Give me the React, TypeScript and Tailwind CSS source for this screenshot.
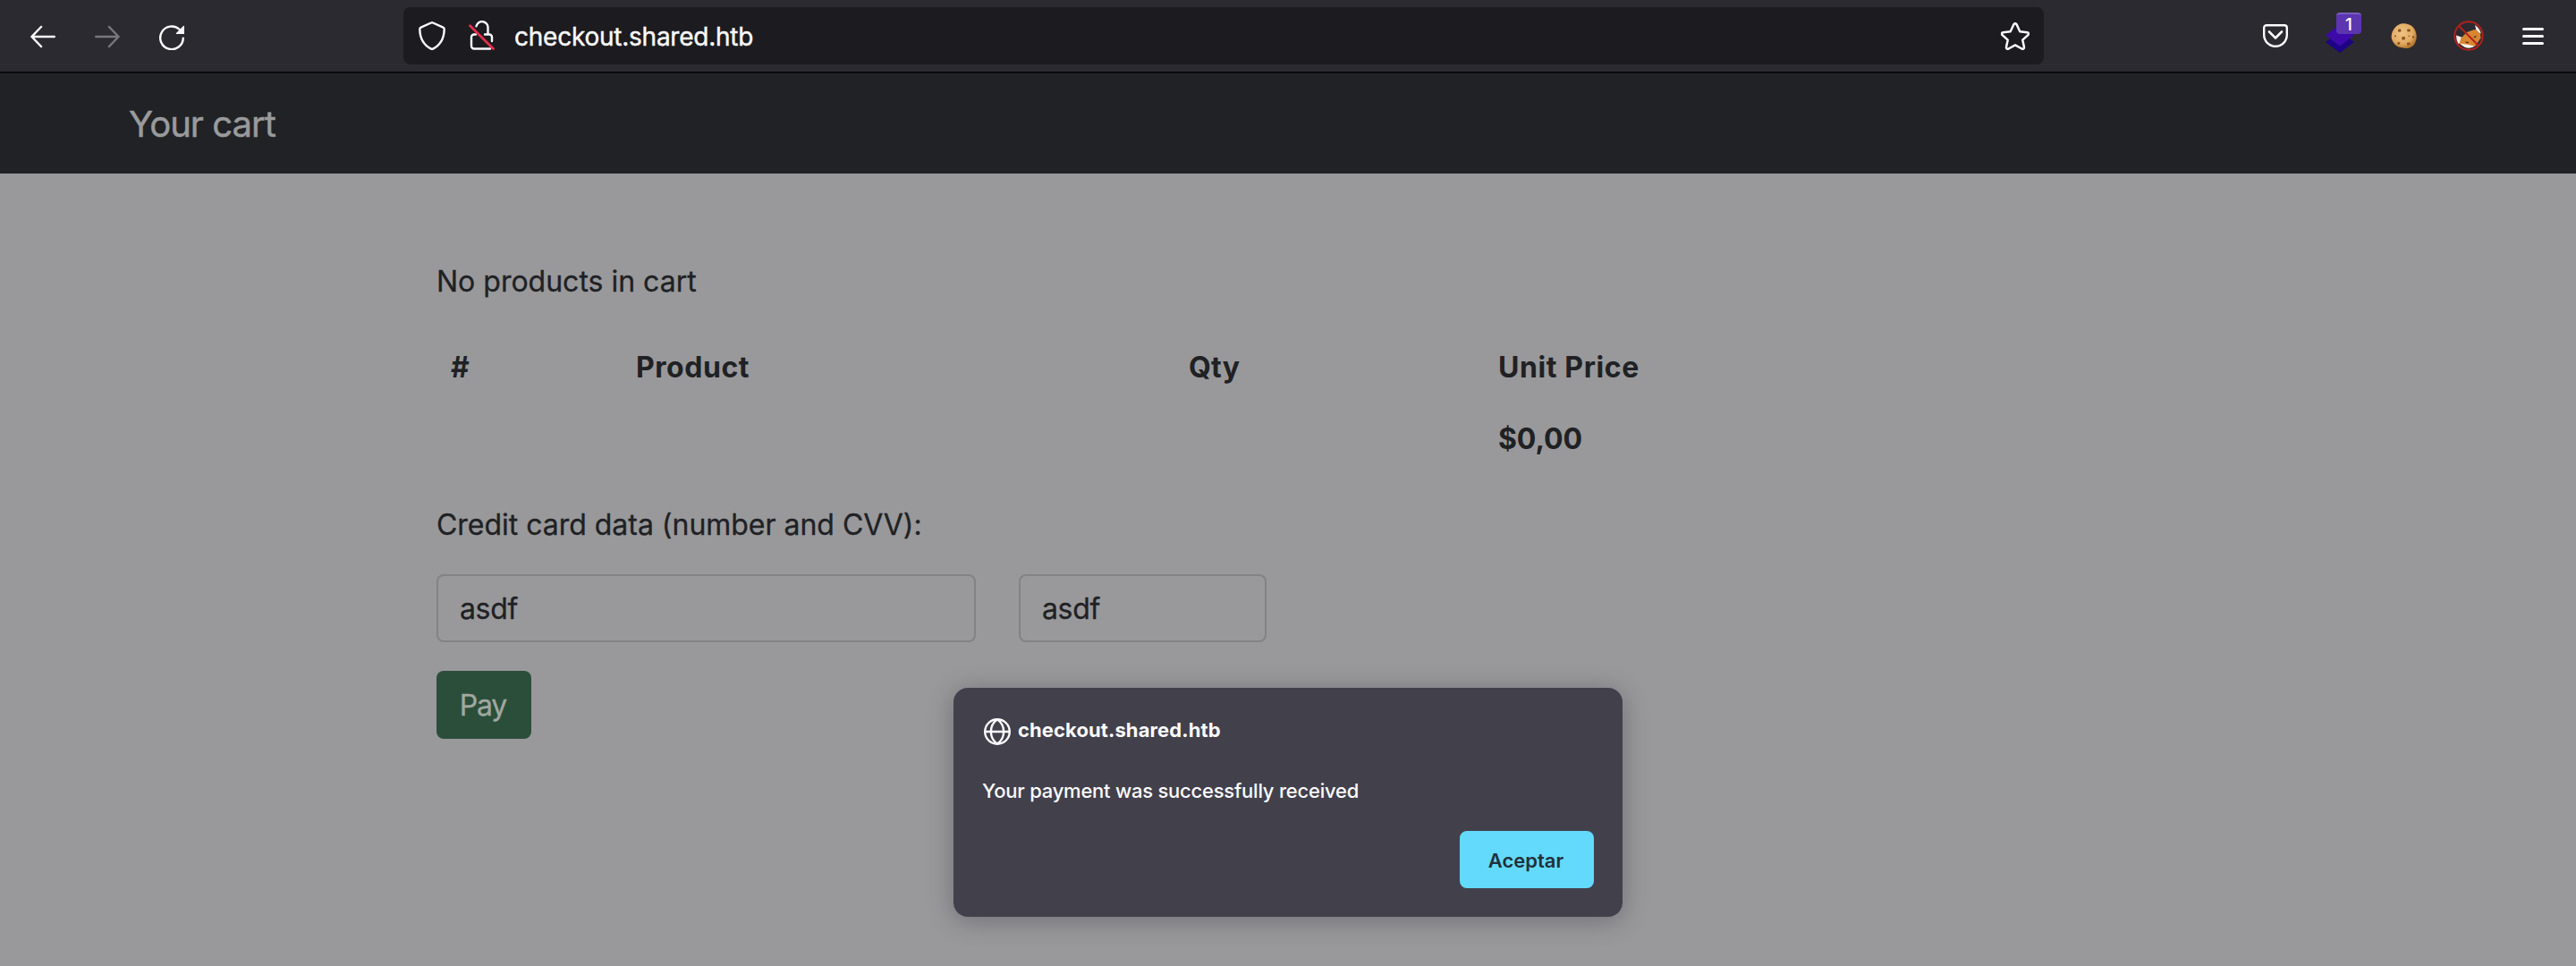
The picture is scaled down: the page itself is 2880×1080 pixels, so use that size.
import React from "react";

function BackIcon({ className }: { className: string }) {
  return (
    <svg width="28" height="26" viewBox="0 0 28 26" fill="none" stroke="currentColor" strokeWidth="2.5" strokeLinecap="round" strokeLinejoin="round" className={className}>
      <path d="M26.700 13H1.500M12 2 1.500 13 12 24" />
    </svg>
  );
}

function ReloadIcon() {
  return (
    <svg width="28" height="28" viewBox="0 0 28 28" fill="none" stroke="#fbfbfe" strokeWidth="2.400" strokeLinecap="round">
      <path d="M26.800 14.600A12.800 12.800 0 1 1 22.800 5" />
      <path d="M27.400 1.400v8h-8z" fill="#fbfbfe" strokeWidth="1.200" strokeLinejoin="round" />
    </svg>
  );
}

function ShieldIcon() {
  return (
    <svg width="30" height="32" viewBox="0 0 30 32" fill="none" stroke="#fbfbfe" strokeWidth="2.400" strokeLinejoin="round">
      <path d="M14 1.500q1-.5 2 0l11.400 5.200q1.300.6 1.300 2C28.500 19 24 26.500 16 30.600q-1 .5-2 0C6 26.500 1.500 19 1.300 8.700q0-1.400 1.300-2z" />
    </svg>
  );
}

function InsecureLockIcon() {
  return (
    <svg width="30" height="34" viewBox="0 0 30 34" fill="none" stroke="#fbfbfe" strokeWidth="2.400" strokeLinecap="round">
      <path d="M8.500 6.300A6.600 6.600 0 0 1 21.500 8.500V15.500h1.500a3 3 0 0 1 3 3v4.500M18 15.500h3.500" />
      <path d="M8 15.500H6a3 3 0 0 0-3 3V28.500a3 3 0 0 0 3 3h18" />
      <path d="M1.500 5.800 27.500 31.500" stroke="#e2304e" strokeWidth="2.800" />
    </svg>
  );
}

function StarIcon() {
  return (
    <svg width="32" height="31" viewBox="0 0 32 31" fill="none" stroke="#fbfbfe" strokeWidth="2.500" strokeLinejoin="round">
      <path d="M14.300 2.500q1.700-2.600 3.400 0l3.600 7.700 8.200 1q2.700.8.900 2.900l-6.100 5.600 1.700 8.100q0 2.700-2.600 1.700L16 25.400l-7.400 4.100q-2.600 1-2.600-1.700l1.700-8.100-6.100-5.600q-1.800-2.100.9-2.900l8.200-1z" />
    </svg>
  );
}

function PocketIcon() {
  return (
    <svg width="28" height="26" viewBox="0 0 28 26" fill="none" stroke="#fbfbfe" strokeWidth="2.400" strokeLinecap="round" strokeLinejoin="round">
      <path d="M4 1.200h20a2.800 2.800 0 0 1 2.800 2.800v8a12.800 12.800 0 0 1-25.600 0V4A2.800 2.800 0 0 1 4 1.200z" />
      <path d="m7 8.500 7 7 7-7" strokeWidth="2.600" />
    </svg>
  );
}

function LayersIcon() {
  return (
    <svg width="32" height="32" viewBox="0 0 32 32">
      <path d="M16 9 32 20 16 32 0 20z" fill="#1d0385" />
      <path d="M16 0 32 12.500 16 24.500 0 12.500z" fill="#3d09a8" />
    </svg>
  );
}

function CookieIcon() {
  return (
    <svg width="30" height="29" viewBox="0 0 30 29">
      <defs>
        <radialGradient id="cookie" cx="42%" cy="38%" r="62%">
          <stop offset="0" stopColor="#efc484" />
          <stop offset=".7" stopColor="#e2aa61" />
          <stop offset="1" stopColor="#b8782e" />
        </radialGradient>
      </defs>
      <path d="M9 1.500C13-.5 20 0 24.500 4 29 8.500 30 16 27 22c-2 4-6 6-10.500 6-3 0-3.500-1-6-1C6 26 2 22 .8 17 0 11 3.500 4 9 1.500z" fill="url(#cookie)" />
      <g fill="#8a5525">
        <rect x="8" y="6.500" width="3.400" height="3.200" rx="1" />
        <rect x="18.200" y="6.500" width="3.600" height="3" rx="1" />
        <rect x="12.300" y="15" width="3.600" height="3.400" rx="1" />
        <rect x="18" y="21.500" width="3.600" height="3" rx="1" />
        <rect x="7.300" y="21" width="3" height="2.800" rx="1" />
        <rect x="24" y="14" width="2" height="2.800" rx="1" />
        <rect x="4" y="13.500" width="2" height="1.800" rx=".8" />
        <rect x="19.500" y="13.500" width="1.600" height="1.600" rx=".8" />
      </g>
    </svg>
  );
}

function NoFoxIcon() {
  return (
    <svg width="34" height="34" viewBox="0 0 34 34">
      <path d="M3 16.500 9 18.500 8 25l-2.500 1q-2.500-4-2.500-9.500z" fill="#f6f1ec" />
      <path d="M24 5q5.500 3.500 6.700 9.500L26 13z" fill="#f6f1ec" />
      <path d="M8.500 19.500 15 13l7-2.500 3-.5L30 14.500l.5 5-6 9-10 2L6.500 26z" fill="#d98632" />
      <path d="M7.500 25.500c5 1.500 10 1 16 3-4 3-11 3.500-16-3z" fill="#f8f3ec" />
      <path d="M12.500 23.500l5 .5-2 1.500zM22 18.700l4-2.200-1.500 2.700z" fill="#4a2812" />
      <circle cx="17" cy="17" r="15.700" fill="none" stroke="#b3211c" strokeWidth="2" />
      <path d="m6 6 22 22" stroke="#b3211c" strokeWidth="2" />
    </svg>
  );
}

function GlobeIcon() {
  return (
    <svg width="30" height="30" viewBox="0 0 30 30" fill="none" stroke="#fbfbfe" strokeWidth="2.400">
      <circle cx="15" cy="15" r="13.800" />
      <path d="M1 15h28M15 1.200C5.500 8 5.500 22 15 28.800M15 1.200c9.500 6.800 9.500 20.800 0 27.600" />
    </svg>
  );
}

function Toolbar() {
  return (
    <div className="flex h-[82px] items-center border-b-2 border-[#0b0b0d] bg-[#2b2a30]">
      <div className="flex w-[451px] items-center gap-11 pl-[34px]">
        <BackIcon className="mt-0.5 text-[#fbfbfe]" />
        <BackIcon className="mt-0.5 rotate-180 text-[#78777c]" />
        <div className="mt-1"><ReloadIcon /></div>
      </div>
      <div className="flex h-16 w-[1834px] items-center rounded-lg bg-[#1c1b1f] pr-4 pl-[17px]">
        <ShieldIcon />
        <div className="ml-[26px]"><InsecureLockIcon /></div>
        <span className="mt-0.5 ml-[21px] text-[28px] leading-10 tracking-[-0.24px] text-[#fbfbfe] [-webkit-text-stroke:0.4px_#fbfbfe]">checkout.shared.htb</span>
        <div className="ml-auto"><StarIcon /></div>
      </div>
      <div className="ml-[245px] flex items-center">
        <PocketIcon />
        <div className="relative ml-[42px]">
          <div className="mt-1.5"><LayersIcon /></div>
          <span className="absolute -top-[7px] left-3 flex h-6 w-7 items-center justify-center rounded-[4px] border-t-2 border-[#7b5cc0] bg-[#5c36b0] text-[19px] leading-none font-medium text-white">1</span>
        </div>
        <div className="ml-[41px]"><CookieIcon /></div>
        <div className="ml-[40px]"><NoFoxIcon /></div>
        <div className="ml-[43px] flex w-6 flex-col gap-[5px]">
          <div className="h-[3px] rounded-full bg-[#fbfbfe]" />
          <div className="h-[3px] rounded-full bg-[#fbfbfe]" />
          <div className="h-[3px] rounded-full bg-[#fbfbfe]" />
        </div>
      </div>
    </div>
  );
}

function CartTable() {
  return (
    <div className="mt-8 grid grid-cols-[207px_618px_346px_1fr] font-bold">
      <div className="p-4">#</div>
      <div className="p-4 tracking-[0.55px]">Product</div>
      <div className="p-4 tracking-[0.2px]">Qty</div>
      <div className="p-4 tracking-[0.6px]">Unit Price</div>
      <div className="col-start-4 p-4 tracking-[-0.1px]">$0,00</div>
    </div>
  );
}

function CardField({ value, className }: { value: string; className: string }) {
  return (
    <div className={`h-[76px] rounded-lg border-2 border-[#828385] px-6 pt-[13px] tracking-[-0.35px] ${className}`}>
      {value}
    </div>
  );
}

function Dialog() {
  return (
    <div className="absolute top-[769px] left-[1066px] flex h-64 w-[748px] flex-col rounded-2xl bg-[#42404b] px-8 pt-[33px] pb-8 text-[22px] leading-8 text-[#fbfbfe] shadow-[0_4px_28px_rgba(40,40,55,0.36)]">
      <div className="flex items-center gap-2 pl-0.5">
        <GlobeIcon />
        <span className="-mt-0.5 pb-px font-bold tracking-[0.1px]">checkout.shared.htb</span>
      </div>
      <p className="mt-[35px] font-medium tracking-[-0.23px]">Your payment was successfully received</p>
      <button className="mt-auto h-16 w-[150px] self-end rounded-lg bg-[#63dafb] pt-0.5 pr-0.5 font-semibold text-[#20303c]">Aceptar</button>
    </div>
  );
}

export default function App() {
  return (
    <div className="relative h-[1080px] w-[2880px] overflow-hidden bg-[#99999b] font-['Inter',sans-serif]">
      <Toolbar />
      <header className="flex h-28 items-center bg-[#212225] pt-0.5 pl-36">
        <span className="text-[40px] leading-[60px] tracking-[-0.95px] text-[#9a9a9c] [-webkit-text-stroke:0.5px_#9a9a9c]">Your cart</span>
      </header>
      <main className="ml-[488px] w-[1904px] pt-[97px] text-[32px] leading-[48px] text-[#202124]">
        <p className="[-webkit-text-stroke:0.3px_#202124]">No products in cart</p>
        <CartTable />
        <p className="mt-8 tracking-[-0.02px] [-webkit-text-stroke:0.3px_#202124]">Credit card data (number and CVV):</p>
        <div className="mt-[31px] flex gap-12 [-webkit-text-stroke:0.3px_#202124]">
          <CardField value="asdf" className="w-[603px]" />
          <CardField value="asdf" className="w-[277px]" />
        </div>
        <button className="mt-8 block h-[76px] w-[106px] rounded-lg bg-[#2b4e3b] pt-0.5 pr-0.5 tracking-[-1.2px] text-[#a0a8a0] [-webkit-text-stroke:0.3px_#a0a8a0]">Pay</button>
      </main>
      <Dialog />
    </div>
  );
}
